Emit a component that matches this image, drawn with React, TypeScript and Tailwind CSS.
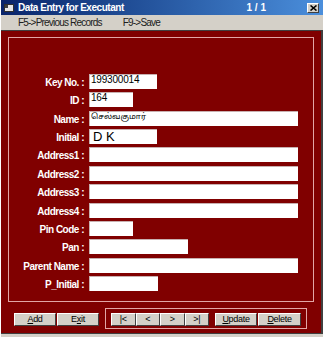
const fields = [
  { label: 'Key No. :', w: 'w-[68px]', value: '199300014' },
  { label: 'ID :', w: 'w-[44px]', value: '164' },
  { label: 'Name :', w: 'w-[209px]', value: 'செல்வகுமார்', tamil: true },
  { label: 'Initial :', w: 'w-[68px]', value: 'D K', big: true },
  { label: 'Address1 :', w: 'w-[209px]', value: '' },
  { label: 'Address2 :', w: 'w-[209px]', value: '' },
  { label: 'Address3 :', w: 'w-[209px]', value: '' },
  { label: 'Address4 :', w: 'w-[209px]', value: '' },
  { label: 'Pin Code :', w: 'w-[44px]', value: '' },
  { label: 'Pan :', w: 'w-[99px]', value: '' },
  { label: 'Parent Name :', w: 'w-[209px]', value: '' },
  { label: 'P_Initial :', w: 'w-[69px]', value: '' },
]

function Btn({ children, w }: { children: React.ReactNode; w: string }) {
  return (
    <div
      className={`${w} h-[13px] bg-[#d4d0c8] border border-t-white border-l-white border-r-[#404040] border-b-[#404040] flex items-center justify-center text-[9px] tracking-[-0.3px] leading-none text-black`}
    >
      {children}
    </div>
  )
}

export default function App() {
  return (
    <div className="w-[323px] h-[337px] bg-[#d4d0c8] flex flex-col overflow-hidden font-['Liberation_Sans',Arial,sans-serif] border-l border-white">
      {/* title bar */}
      <div className="h-[15px] flex items-center bg-gradient-to-r from-[#0a246a] to-[#4b8fdc] text-white pr-[4px]">
        <svg width="11" height="10" viewBox="0 0 11 10" className="ml-[3px]">
          <rect x="0.5" y="1.5" width="9" height="7" fill="#e8e8e8" stroke="#303030" />
          <rect x="1" y="2" width="3" height="3" fill="#404040" />
        </svg>
        <span className="ml-[3px] text-[10px] font-bold tracking-[-0.45px] leading-none">Data Entry for Executant</span>
        <span className="ml-auto mr-[41px] text-[10px] font-bold leading-none">1 / 1</span>
        <div className="w-[12px] h-[10px] bg-[#d4d0c8] border border-t-white border-l-white border-r-[#404040] border-b-[#404040] flex items-center justify-center">
          <svg width="7" height="6" viewBox="0 0 7 6">
            <path d="M0.5 0.5 L6.5 5.5 M6.5 0.5 L0.5 5.5" stroke="#000" strokeWidth="1.6" />
          </svg>
        </div>
      </div>

      {/* menu bar */}
      <div className="h-[16px] flex items-center text-[10px] tracking-[-0.8px] leading-none text-[#202020] border-b border-[#404040]">
        <span className="ml-[17px]">F5-&gt;Previous Records</span>
        <span className="ml-[21px]">F9-&gt;Save</span>
      </div>

      {/* body */}
      <div className="h-[302px] bg-[#800000] border-r-2 border-[#404040] flex flex-col">
        <div className="mt-[6px] ml-[7px] w-[306px] h-[265px] border border-[#e2a6a6] pt-[36px] flex flex-col gap-[3.36px]">
          {fields.map((f) => (
            <div key={f.label} className="flex items-end h-[15px]">
              <div className="w-[76px] text-right text-[10px] font-bold tracking-[-0.5px] text-white leading-none pb-[1px] pr-[1px]">
                {f.label}
              </div>
              <div
                className={`${f.w} h-[15px] ml-[4px] bg-white border-t border-l border-[#c8b0b0] pl-[1px] text-black overflow-hidden ${
                  f.big
                    ? 'text-[13px] leading-[14px] pl-[3px]'
                    : f.tamil
                      ? "font-['Noto_Sans_Tamil','Noto_Sans',sans-serif] text-[8px] leading-[11px]"
                      : 'text-[10px] leading-[10px] tracking-[-0.2px]'
                }`}
              >
                {f.value}
              </div>
            </div>
          ))}
        </div>

        {/* bottom buttons */}
        <div className="mt-[6px] flex items-start">
          <div className="ml-[13px] mt-[5px] flex gap-[1px]">
            <Btn w="w-[42px]">
              <span className="underline">A</span>dd
            </Btn>
            <Btn w="w-[42px]">
              E<span className="underline">x</span>it
            </Btn>
          </div>
          <div className="ml-[6px] w-[202px] h-[21px] border border-[#e2a6a6] pt-[4px] pl-[5px] flex">
            <Btn w="w-[24.5px]">|&lt;</Btn>
            <Btn w="w-[24.5px]">&lt;</Btn>
            <Btn w="w-[24.5px]">&gt;</Btn>
            <Btn w="w-[24.5px]">&gt;|</Btn>
            <div className="ml-[6px] flex gap-[1px]">
              <Btn w="w-[42px]">
                <span className="underline">U</span>pdate
              </Btn>
              <Btn w="w-[43px]">
                <span className="underline">D</span>elete
              </Btn>
            </div>
          </div>
        </div>
      </div>
      <div className="h-[1px] bg-[#404040]" />
    </div>
  )
}
